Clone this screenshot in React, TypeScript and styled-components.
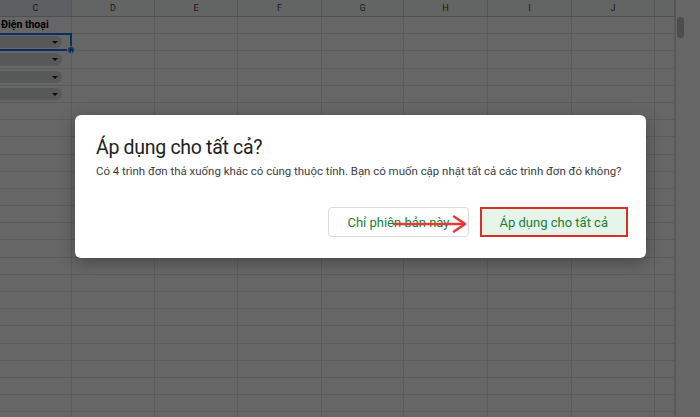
import styled, { createGlobalStyle } from "styled-components";

const GlobalStyle = createGlobalStyle`
    html, body {
        margin: 0;
        padding: 0;
        overflow: hidden;
        background: #ffffff;
    }
    body {
        font-family: Roboto, "Liberation Sans", Arial, sans-serif;
    }
`;

// columns C..K as they appear in the crop
const columns = [
    { name: "C", width: 72, active: true },
    { name: "D", width: 83 },
    { name: "E", width: 83 },
    { name: "F", width: 84 },
    { name: "G", width: 82 },
    { name: "H", width: 84 },
    { name: "I", width: 84 },
    { name: "J", width: 83 },
    { name: "", width: 20 },
];

const ROWS = 24;

type CellData = { text?: string; bold?: boolean; chip?: boolean; selected?: boolean };

const cellFor = (row: number, col: number): CellData => {
    if (col !== 0) return {};
    if (row === 0) return { text: "Điện thoại", bold: true };
    if (row >= 1 && row <= 4) return { chip: true, selected: row === 1 };
    return {};
};

export default function App() {
    return (
        <>
            <GlobalStyle />
            <Page>
                <Sheet>
                    <Grid>
                        <HeaderRow>
                            {columns.map((c, i) => (
                                <HeaderCell key={i} $width={c.width} $active={c.active}>
                                    {c.name}
                                </HeaderCell>
                            ))}
                        </HeaderRow>
                        {Array.from({ length: ROWS }).map((_, r) => (
                            <Row key={r}>
                                {columns.map((c, ci) => {
                                    const d = cellFor(r, ci);
                                    return (
                                        <Cell key={ci} $width={c.width} $bold={d.bold}>
                                            {d.text}
                                            {d.chip && (
                                                <Chip>
                                                    <ChipArrow />
                                                </Chip>
                                            )}
                                            {d.selected && (
                                                <Selection>
                                                    <Handle />
                                                </Selection>
                                            )}
                                        </Cell>
                                    );
                                })}
                            </Row>
                        ))}
                    </Grid>
                    <ScrollTrack>
                        <Thumb />
                    </ScrollTrack>
                </Sheet>

                <Overlay>
                    <Dialog>
                        <Title>Áp dụng cho tất cả?</Title>
                        <Message>
                            Có 4 trình đơn thả xuống khác có cùng thuộc tính. Bạn có muốn cập nhật tất cả các trình
                            đơn đó không?
                        </Message>
                        <Actions>
                            <Button>
                                Chỉ phiên bản này
                                <Arrow width="82" height="24" viewBox="0 0 82 24">
                                    <path d="M5 12 L75 12" stroke="#e53935" strokeWidth="2.6" strokeLinecap="round" />
                                    <path
                                        d="M65 4.5 L76 12 L65 19.5"
                                        fill="none"
                                        stroke="#e53935"
                                        strokeWidth="2.6"
                                        strokeLinecap="round"
                                        strokeLinejoin="round"
                                    />
                                </Arrow>
                            </Button>
                            <Button $primary>Áp dụng cho tất cả</Button>
                        </Actions>
                    </Dialog>
                </Overlay>
            </Page>
        </>
    );
}

const Page = styled.div`
    position: relative;
    width: 700px;
    height: 417px;
    overflow: hidden;
    background: #ffffff;
`;

const Sheet = styled.div`
    display: flex;
    height: 100%;
`;

const Grid = styled.div`
    display: flex;
    flex-direction: column;
    width: 675px;
    overflow: hidden;
`;

const HeaderRow = styled.div`
    display: flex;
    height: 16px;
    flex-shrink: 0;
    background: #f8f9fa;
    border-bottom: 1px solid #c4c7c5;
`;

const HeaderCell = styled.div<{ $width: number; $active?: boolean }>`
    width: ${(p) => p.$width}px;
    flex-shrink: 0;
    box-sizing: border-box;
    border-right: 1px solid #d6d8d9;
    background: ${(p) => (p.$active ? "#e9eef6" : "transparent")};
    color: #444746;
    font-size: 9px;
    line-height: 16px;
    text-align: center;
`;

const Row = styled.div`
    display: flex;
    height: 17.2px;
    flex-shrink: 0;
    box-sizing: border-box;
    border-bottom: 1px solid #e1e3e3;
`;

const Cell = styled.div<{ $width: number; $bold?: boolean }>`
    position: relative;
    width: ${(p) => p.$width}px;
    flex-shrink: 0;
    box-sizing: border-box;
    border-right: 1px solid #e1e3e3;
    padding-left: 1px;
    font-size: 10.5px;
    line-height: 16px;
    font-weight: ${(p) => (p.$bold ? 700 : 400)};
    color: #000000;
    white-space: nowrap;
`;

const Chip = styled.div`
    position: absolute;
    left: -10px;
    right: 9px;
    top: 2px;
    bottom: 2px;
    border-radius: 7px;
    background: #d9dce0;
`;

const ChipArrow = styled.div`
    position: absolute;
    right: 4px;
    top: 5px;
    width: 0;
    height: 0;
    border-left: 3.5px solid transparent;
    border-right: 3.5px solid transparent;
    border-top: 3.5px solid #1f1f1f;
`;

const Selection = styled.div`
    position: absolute;
    left: -4px;
    right: -1px;
    top: -1px;
    bottom: -1px;
    border: 2px solid #1a73e8;
`;

const Handle = styled.div`
    position: absolute;
    right: -5px;
    bottom: -5px;
    width: 6px;
    height: 6px;
    border-radius: 50%;
    background: #1a73e8;
    border: 1px solid #ffffff;
`;

const ScrollTrack = styled.div`
    position: relative;
    flex: 1;
    border-left: 1px solid #dadce0;
    background: #ffffff;
`;

const Thumb = styled.div`
    position: absolute;
    left: 1px;
    top: 17px;
    width: 7px;
    height: 21px;
    border-radius: 4px;
    background: #bdc1c6;
`;

const Overlay = styled.div`
    position: absolute;
    inset: 0;
    background: rgba(0, 0, 0, 0.6);
    padding: 115px 0 0 75px;
`;

const Dialog = styled.div`
    width: 571px;
    box-sizing: border-box;
    padding: 21px 18px 21px 21px;
    background: #ffffff;
    border-radius: 6px;
    box-shadow: 0 4px 16px rgba(0, 0, 0, 0.3);
`;

const Title = styled.h2`
    margin: 0;
    font-family: Roboto, "Liberation Sans", sans-serif;
    font-weight: 400;
    font-size: 19.5px;
    letter-spacing: -0.3px;
    line-height: 24px;
    color: #202124;
`;

const Message = styled.p`
    margin: 3px 0 0;
    font-size: 11.45px;
    line-height: 16px;
    color: #3c4043;
    white-space: nowrap;
`;

const Actions = styled.div`
    display: flex;
    justify-content: flex-end;
    align-items: center;
    gap: 11px;
    margin-top: 28px;
`;

const Button = styled.button<{ $primary?: boolean }>`
    position: relative;
    height: 30px;
    box-sizing: border-box;
    padding: 0 18px;
    border: ${(p) => (p.$primary ? "2px solid #d93025" : "1px solid #dadce0")};
    border-radius: ${(p) => (p.$primary ? "0" : "4px")};
    background: ${(p) => (p.$primary ? "#e6f4ea" : "#ffffff")};
    color: #188038;
    font-family: Roboto, "Liberation Sans", sans-serif;
    font-weight: 400;
    font-size: 13px;
    cursor: pointer;
`;

const Arrow = styled.svg`
    position: absolute;
    left: 60px;
    top: 4px;
`;
